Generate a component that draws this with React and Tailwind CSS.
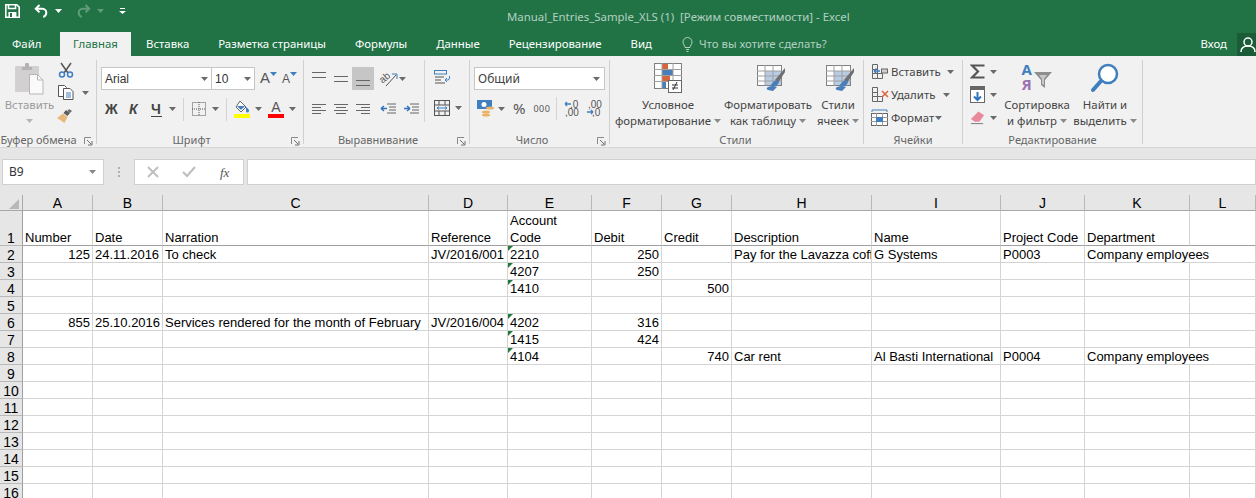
import React from 'react';

const Caret = ({ className = '', color = '#6a6a6a' }) => (
  <svg width="7" height="4" viewBox="0 0 7 4" className={`shrink-0 ${className}`}>
    <path d="M0 0h7L3.500 4z" fill={color} />
  </svg>
);

const Launcher = () => (
  <svg width="9" height="9" viewBox="0 0 9 9" className="shrink-0">
    <path d="M.5 7V.5H7" fill="none" stroke="#8a8a8a" />
    <path d="M3 3l4 4M8 4v4H4" fill="none" stroke="#6f6f6f" />
  </svg>
);

const Lines = ({ rows, width = 18, color = '#666' }) => (
  <svg width={width} height="16" viewBox={`0 0 ${width} 16`} className="shrink-0">
    {rows.map(([x, y, w], i) => (
      <rect key={i} x={x} y={y} width={w} height="1" fill={color} />
    ))}
  </svg>
);

const SaveIcon = () => (
  <svg width="15" height="14" viewBox="0 0 15 14" fill="none" stroke="#fff" strokeWidth="1.600">
    <path d="M.8.8h11l2.400 2.400v10H.8z" />
    <path d="M3.500 1v3.500h7V1" />
    <rect x="3.400" y="8" width="8" height="5" fill="#fff" stroke="none" />
    <rect x="5" y="9" width="2" height="4" fill="#217346" stroke="none" />
  </svg>
);

const UndoIcon = ({ color = '#fff' }) => (
  <svg width="15" height="14" viewBox="0 0 15 14" fill="none" stroke={color} strokeWidth="2">
    <path d="M5.500 1L1.800 4.800l3.700 3.600" />
    <path d="M2 4.800h6.500a4 4 0 0 1 3.800 4c0 2-1 3.400-3 4.200" />
  </svg>
);

const RedoIcon = () => (
  <svg width="15" height="14" viewBox="0 0 15 14" fill="none" stroke="#5f9c7c" strokeWidth="2">
    <path d="M9.500 1l3.700 3.800-3.700 3.600" />
    <path d="M13 4.800H6.500a4 4 0 0 0-3.800 4c0 2 1 3.400 3 4.200" />
  </svg>
);

const PasteIcon = () => (
  <svg width="30" height="32" viewBox="0 0 30 32">
    <rect x="0" y="3" width="24" height="26" rx="1" fill="#d3d0d1" />
    <path d="M7 4h3V1.500a2 2 0 0 1 4 0V4h3v3H7z" fill="#b5b2b3" />
    <path d="M14.500 11.500h8l5.500 5.500v14H14.500z" fill="#fafafa" stroke="#b9b6b7" />
    <path d="M22.500 11.500v5.500H28" fill="none" stroke="#b9b6b7" />
  </svg>
);

const CutIcon = () => (
  <svg width="16" height="16" viewBox="0 0 16 16" fill="none">
    <path d="M3 1l7 10M13 1L6 11" stroke="#555" strokeWidth="1.500" />
    <circle cx="4" cy="12.500" r="2.500" stroke="#3f7fbf" strokeWidth="1.500" />
    <circle cx="12" cy="12.500" r="2.500" stroke="#3f7fbf" strokeWidth="1.500" />
  </svg>
);

const CopyIcon = () => (
  <svg width="16" height="15" viewBox="0 0 16 15" fill="none">
    <path d="M.5.500h6l2 2v9h-8z" fill="#fff" stroke="#555" />
    <path d="M5.500 3.500h6.500l3 3v8h-9.500z" fill="#fff" stroke="#555" />
    <path d="M8 8h5M8 10h5M8 12h5" stroke="#3f7fbf" />
  </svg>
);

const BrushIcon = () => (
  <svg width="17" height="16" viewBox="0 0 17 16">
    <path d="M10 1l4 3-2.500 3-4-3z" fill="#5c5c5c" />
    <path d="M7 4.500l4.500 3.500-3 6L1 9z" fill="#e8b978" />
    <path d="M13 0l3 2-2 2-2.500-2z" fill="#6d6d6d" />
  </svg>
);

const BordersIcon = () => (
  <svg width="14" height="14" viewBox="0 0 14 14" fill="none" stroke="#555" strokeDasharray="1 1">
    <rect x=".5" y=".5" width="13" height="13" />
    <path d="M7 0v14M0 7h14" />
  </svg>
);

const FillIcon = () => (
  <svg width="17" height="18" viewBox="0 0 17 18">
    <path d="M6 1l6 6-5 5-5-5z" fill="#fff" stroke="#666" />
    <path d="M12 7c2 1 3 3 3 4a1.500 1.500 0 0 1-3 0c0-1 0-2 0-4z" fill="#3f7fbf" />
    <path d="M3 6h8l-4 4z" fill="#3f7fbf" />
    <rect x="0" y="14" width="16" height="4" fill="#ffff00" />
  </svg>
);

const OrientIcon = () => (
  <svg width="18" height="16" viewBox="0 0 18 16" fill="none">
    <text x="0" y="10" transform="rotate(-40 5 8)" fontSize="10" fontFamily="Liberation Sans, sans-serif" fill="#555">ab</text>
    <path d="M6 15L16 4" stroke="#555" />
    <path d="M12 3h5v5" stroke="#3f7fbf" />
  </svg>
);

const WrapIcon = () => (
  <svg width="17" height="15" viewBox="0 0 17 15" fill="none">
    <rect x=".5" y=".5" width="12" height="3.500" stroke="#3f7fbf" />
    <path d="M1 7h9M1 10h6M1 13h10" stroke="#555" />
    <path d="M11 10h2.500a2 2 0 0 0 2-2V6M11 10l2-2M11 10l2 2" stroke="#3f7fbf" />
  </svg>
);

const MergeIcon = () => (
  <svg width="16" height="16" viewBox="0 0 16 16" fill="none" stroke="#555">
    <rect x=".5" y=".5" width="15" height="15" />
    <path d="M0 5h16M0 11h16M5 0v5M11 0v5M5 11v5M11 11v5" />
    <path d="M3 8h10M3 8l2-1.500M3 8l2 1.500M13 8l-2-1.500M13 8l-2 1.500" stroke="#3f7fbf" />
  </svg>
);

const MoneyIcon = () => (
  <svg width="18" height="17" viewBox="0 0 18 17">
    <rect x="0" y="0" width="15" height="9" fill="#3f7fbf" />
    <circle cx="7" cy="4.500" r="2.500" fill="#fff" />
    <ellipse cx="13" cy="8" rx="4" ry="1.500" fill="#eab264" />
    <ellipse cx="9" cy="12" rx="4" ry="1.500" fill="#eab264" />
    <ellipse cx="9" cy="15" rx="4" ry="1.500" fill="#eab264" />
  </svg>
);

const DecimalIcon = ({ up }) => (
  <svg width="16" height="17" viewBox="0 0 16 17" fontFamily="Liberation Sans, sans-serif" fontSize="10" fill="#555">
    <text x={up ? 6 : 2} y="8">{up ? ',0' : ',00'}</text>
    <text x={up ? 1 : 6} y="16">{up ? ',00' : ',0'}</text>
    <path d={up ? 'M7 4H1M1 4l2-2M1 4l2 2' : 'M1 12h6M7 12l-2-2M7 12l-2 2'} stroke="#3f7fbf" strokeWidth="1.300" fill="none" />
  </svg>
);

const Sheet = ({ children, w = 28, h = 30 }) => (
  <svg width={w} height={h} viewBox="0 0 28 30">{children}</svg>
);

const CondFormatIcon = () => (
  <Sheet>
    <rect x=".5" y=".5" width="27" height="25" fill="#fff" stroke="#808080" />
    <rect x="8" y="1" width="6" height="5" fill="#d8643c" />
    <rect x="8" y="7" width="11" height="5" fill="#4a7ebb" />
    <rect x="8" y="13" width="8" height="5" fill="#d8643c" />
    <rect x="8" y="19" width="4" height="6" fill="#4a7ebb" />
    <path d="M8 0v26M19 0v26M0 6.500h28M0 12.500h28M0 18.500h28" stroke="#a0a0a0" fill="none" />
    <rect x="14.500" y="17.500" width="13" height="12" fill="#fff" stroke="#666" />
    <path d="M18 22h6M18 25h6M19 27l4-8" stroke="#333" fill="none" />
  </Sheet>
);

const TableBrushIcon = () => (
  <Sheet w={30}>
    <rect x=".5" y="2.500" width="24" height="20" fill="#fff" stroke="#808080" />
    <rect x="8" y="8" width="16" height="14" fill="#b8cce4" />
    <path d="M8 2v21M16 2v21M0 8h25M0 13h25M0 18h25" stroke="#a0a0a0" fill="none" />
    <path d="M28 5l-10 12 3 3L28 9z" fill="#6f6f6f" />
    <path d="M20 17c-4 1-5 4-7 6 4 1 8 0 9-4z" fill="#4a7ebb" />
    <path d="M11 27a5 2 0 0 1 9-3l-4 4z" fill="#4a7ebb" />
  </Sheet>
);

const CellInsertIcon = ({ mark }) => (
  <svg width="18" height="17" viewBox="0 0 18 17" fill="none">
    <path d="M1.500 1.500h5v5h-5zM1.500 10.500h5v5h-5zM6.500 10.500h5v5h-5z" stroke="#666" />
    <path d="M1.500 6.500h5v4h-5z" stroke="#666" />
    {mark === 'in' && (
      <>
        <rect x="10.500" y="6" width="6" height="4" stroke="#666" fill="#cfcfcf" />
        <path d="M3 8h6M3 8l2.500-2.500M3 8l2.500 2.500" stroke="#3f7fbf" strokeWidth="1.400" />
      </>
    )}
    {mark === 'del' && <path d="M11 5l6 6M17 5l-6 6" stroke="#d8643c" strokeWidth="1.500" />}
  </svg>
);

const CellFormatIcon = () => (
  <svg width="18" height="17" viewBox="0 0 18 17" fill="none">
    <path d="M1 1h15M1 1v2M16 1v2" stroke="#3f7fbf" />
    <rect x=".5" y="4.500" width="16" height="12" stroke="#666" fill="#fff" />
    <path d="M5.500 4v13M11.500 4v13M0 8.500h17M0 12.500h17" stroke="#999" />
    <rect x="5" y="8" width="7" height="5" fill="#3f7fbf" />
  </svg>
);

const SigmaIcon = () => (
  <svg width="15" height="15" viewBox="0 0 15 15" fill="none" stroke="#555" strokeWidth="2.200" className="shrink-0">
    <path d="M14.500 1.500H2L8 7.500 2 13.500h12.500" />
  </svg>
);

const FillDownIcon = () => (
  <svg width="15" height="17" viewBox="0 0 15 17" className="shrink-0">
    <rect x=".5" y=".5" width="14" height="16" fill="#fff" stroke="#666" />
    <rect x="0" y="0" width="15" height="4" fill="#666" />
    <path d="M7.500 6v8M4 10.500L7.500 14l3.500-3.500" stroke="#2f74bd" strokeWidth="2" fill="none" />
  </svg>
);

const EraserIcon = () => (
  <svg width="15" height="15" viewBox="0 0 16 15" className="shrink-0">
    <path d="M9 1l6 4-5 7H5L1 9z" fill="#e88a9c" />
    <path d="M1 14h13" stroke="#777" />
  </svg>
);

const SearchIcon = () => (
  <svg width="28" height="30" viewBox="0 0 28 30" fill="none" stroke="#3f7fbf">
    <circle cx="17" cy="11" r="9" strokeWidth="2.500" fill="#fff" />
    <path d="M10 18L2 27" strokeWidth="4" strokeLinecap="round" />
  </svg>
);

const SortFilterIcon = () => (
  <div className="relative h-[30px] w-[31px] shrink-0">
    <svg width="31" height="30" viewBox="0 0 31 30">
      <path d="M12 9h18l-7 8v8l-4-3v-5z" fill="#8e8e8e" />
      <path d="M17 12h8l-3 4v6l-2-1v-5z" fill="#c8c8c8" />
    </svg>
    <span className="absolute left-0 -top-[1px] text-[15px] font-bold leading-[15px] text-[#3f7fbf]">A</span>
    <span className="absolute left-0 top-[14px] text-[15px] font-bold leading-[15px] text-[#9b6fb1]">Я</span>
  </div>
);

const Sep = ({ className = '' }) => <div className={`h-[23px] w-px shrink-0 bg-[#d4d4d4] ${className}`} />;

const Group = ({ width, label, launcher, labelPad = '', children }) => (
  <div className={`h-[84px] shrink-0 border-r border-[#d0d0d0] ${width}`}>
    <div className="h-[74px]">{children}</div>
    <div className="relative flex h-3 items-center justify-center">
      <span className={`text-[11px] leading-3 whitespace-nowrap text-[#666] ${labelPad}`}>{label}</span>
      {launcher && (
        <div className="absolute right-[3px] top-[3px]">
          <Launcher />
        </div>
      )}
    </div>
  </div>
);

const BigLabel = ({ top, bottom, width, caret = true }) => (
  <div className={`flex shrink-0 flex-col items-center text-[11.400px] leading-4 text-[#444] ${width}`}>
    <span className="whitespace-nowrap">{top}</span>
    <span className="flex items-center gap-[3px] whitespace-nowrap">
      {bottom}
      {caret && <Caret color="#8a8a8a" />}
    </span>
  </div>
);

const Ribbon = () => (
  <div className="flex h-[92px] border-b border-[#d5d5d5] bg-[#f1f1f1] pt-1 font-['Noto_Sans',sans-serif]">
    <Group width="w-[97px]" label="Буфер обмена" launcher labelPad="mr-[19px]">
      <div className="flex">
        <div className="flex w-[56px] flex-col items-center pl-[3px] pt-[3px]">
          <PasteIcon />
          <span className="mt-[1px] text-[11.400px] leading-[18px] text-[#9a9a9a]">Вставить</span>
          <Caret className="mt-[5px]" color="#b5b5b5" />
        </div>
        <div className="flex flex-col pt-[2px]">
          <div className="ml-[2px]"><CutIcon /></div>
          <div className="ml-[2px] mt-[7px] flex items-center gap-[8px]"><CopyIcon /><Caret /></div>
          <div className="mt-[9px]"><BrushIcon /></div>
        </div>
      </div>
    </Group>

    <Group width="w-[207px]" label="Шрифт" launcher labelPad="mr-[17px]">
      <div className="pl-[4px] pt-[7px]">
        <div className="flex h-[23px] items-center">
          <div className="flex h-[23px] w-[111px] items-center justify-between border border-[#c6c6c6] bg-white pl-[3px] pr-[3px] font-['Liberation_Sans',sans-serif] text-[12px] text-[#333]">
            Arial<Caret />
          </div>
          <div className="-ml-px flex h-[23px] w-[44px] items-center justify-between border border-[#c6c6c6] bg-white pl-[3px] pr-[3px] font-['Liberation_Sans',sans-serif] text-[12px] text-[#333]">
            10<Caret />
          </div>
          <span className="ml-[5px] font-['Liberation_Sans',sans-serif] text-[15px] text-[#555]">A</span>
          <Caret className="-mt-[9px]" color="#3f7fbf" />
          <span className="ml-[5px] font-['Liberation_Sans',sans-serif] text-[12px] text-[#555]">A</span>
          <Caret className="-mt-[9px]" color="#3f7fbf" />
        </div>
        <div className="mt-[10px] flex h-[18px] items-center text-[14px] text-[#444]">
          <span className="ml-[4px] w-[22px] font-['Liberation_Sans',sans-serif] font-bold leading-none">Ж</span>
          <span className="ml-[2px] w-[20px] font-['Liberation_Sans',sans-serif] font-bold italic leading-none">К</span>
          <span className="ml-[2px] w-[11px] border-b border-[#444] font-['Liberation_Sans',sans-serif] font-bold leading-none">Ч</span>
          <Caret className="ml-[7px]" />
          <Sep className="ml-[7px]" />
          <div className="ml-[8px]"><BordersIcon /></div>
          <Caret className="ml-[6px]" />
          <Sep className="ml-[7px]" />
          <div className="ml-[7px]"><FillIcon /></div>
          <Caret className="ml-[4px]" />
          <div className="ml-[6px] flex w-[16px] flex-col items-center">
            <span className="font-['Liberation_Sans',sans-serif] text-[14px] leading-[14px] text-[#555]">A</span>
            <div className="h-[4px] w-[16px] bg-[#f00]" />
          </div>
          <Caret className="ml-[5px]" />
        </div>
      </div>
    </Group>

    <Group width="w-[166px]" label="Выравнивание" launcher labelPad="mr-[17px]">
      <div className="flex">
        <div className="h-[62px] w-[121px] border-r border-[#d4d4d4] pl-[8px] pt-[7px]">
          <div className="flex h-[23px] items-center">
            <Lines rows={[[0, 1, 14], [0, 6, 14]]} width={15} />
            <div className="ml-[7px]"><Lines rows={[[0, 5, 14], [0, 10, 14]]} width={15} /></div>
            <div className="ml-[3px] flex h-[23px] w-[22px] items-center justify-center bg-[#c6c6c6]">
              <Lines rows={[[0, 9, 14], [0, 14, 14]]} width={15} />
            </div>
            <div className="ml-[6px]"><OrientIcon /></div>
            <Caret className="ml-[1px]" />
          </div>
          <div className="mt-[10px] flex h-[18px] items-center gap-[6px]">
            <Lines rows={[[0, 3, 14], [0, 6, 9], [0, 9, 14], [0, 12, 9]]} width={16} />
            <Lines rows={[[0, 3, 14], [2, 6, 10], [0, 9, 14], [2, 12, 10]]} width={16} />
            <Lines rows={[[0, 3, 14], [5, 6, 9], [0, 9, 14], [5, 12, 9]]} width={16} />
            <svg width="17" height="16" viewBox="0 0 17 16" fill="none" className="ml-[2px]">
              <path d="M7 3h9M9 6h7M9 9h7M7 12h9" stroke="#666" />
              <path d="M1 7.500h6M1 7.500l3-2.500M1 7.500l3 2.500" stroke="#2f74bd" strokeWidth="1.500" />
            </svg>
            <svg width="17" height="16" viewBox="0 0 17 16" fill="none">
              <path d="M7 3h9M9 6h7M9 9h7M7 12h9" stroke="#666" />
              <path d="M1 7.500h6M7 7.500L4 5M7 7.500L4 10" stroke="#2f74bd" strokeWidth="1.500" />
            </svg>
          </div>
        </div>
        <div className="pl-[9px] pt-[10px]">
          <WrapIcon />
          <div className="mt-[15px] flex items-center gap-[5px]"><MergeIcon /><Caret /></div>
        </div>
      </div>
    </Group>

    <Group width="w-[140px]" label="Число" launcher labelPad="mr-[15px]">
      <div className="pl-[4px] pt-[7px]">
        <div className="flex h-[23px] w-[131px] items-center justify-between border border-[#c6c6c6] bg-white pl-[3px] pr-[4px] text-[12px] text-[#444]">
          Общий<Caret />
        </div>
        <div className="mt-[9px] flex h-[19px] items-center">
          <div className="ml-[3px]"><MoneyIcon /></div>
          <Caret className="ml-[3px]" />
          <span className="ml-[8px] text-[15px] leading-none text-[#555]">%</span>
          <span className="ml-[8px] text-[9px] leading-none tracking-[0.500px] text-[#555]">000</span>
          <Sep className="ml-[6px]" />
          <div className="ml-[7px]"><DecimalIcon up /></div>
          <div className="ml-[6px]"><DecimalIcon /></div>
        </div>
      </div>
    </Group>

    <Group width="w-[254px]" label="Стили" labelPad="mr-[2px]">
      <div className="flex pt-[3px]">
        <div className="flex w-[113px] flex-col items-center pl-[3px]">
          <CondFormatIcon />
          <div className="mt-[4px]"><BigLabel top="Условное" bottom="форматирование" width="w-[113px]" /></div>
        </div>
        <div className="flex w-[90px] flex-col items-center">
          <div className="ml-[6px]"><TableBrushIcon /></div>
          <div className="mt-[4px]"><BigLabel top="Форматировать" bottom="как таблицу" width="w-[90px]" /></div>
        </div>
        <div className="flex w-[50px] flex-col items-center">
          <div className="ml-[3px]"><TableBrushIcon /></div>
          <div className="mt-[4px]"><BigLabel top="Стили" bottom="ячеек" width="w-[50px]" /></div>
        </div>
      </div>
    </Group>

    <Group width="w-[99px]" label="Ячейки">
      <div className="flex flex-col pl-[7px] text-[11.400px] text-[#444]">
        <div className="flex h-[23px] items-center">
          <CellInsertIcon mark="in" />
          <span className="ml-[2px] w-[56px]">Вставить</span>
          <Caret />
        </div>
        <div className="flex h-[23px] items-center">
          <CellInsertIcon mark="del" />
          <span className="ml-[2px] w-[52px]">Удалить</span>
          <Caret />
        </div>
        <div className="flex h-[23px] items-center">
          <CellFormatIcon />
          <span className="ml-[2px] w-[44px]">Формат</span>
          <Caret />
        </div>
      </div>
    </Group>

    <Group width="w-[180px]" label="Редактирование">
      <div className="flex">
        <div className="flex w-[40px] flex-col pl-[7px]">
          <div className="flex h-[23px] items-center gap-[5px]"><SigmaIcon /><Caret /></div>
          <div className="flex h-[23px] items-center gap-[5px]"><FillDownIcon /><Caret /></div>
          <div className="flex h-[23px] items-center gap-[5px]"><EraserIcon /><Caret /></div>
        </div>
        <div className="flex w-[68px] flex-col items-center pt-[3px]">
          <SortFilterIcon />
          <div className="mt-[4px]"><BigLabel top="Сортировка" bottom="и фильтр" width="w-[68px]" /></div>
        </div>
        <div className="flex w-[68px] flex-col items-center pt-[3px]">
          <SearchIcon />
          <div className="mt-[4px]"><BigLabel top="Найти и" bottom="выделить" width="w-[68px]" /></div>
        </div>
      </div>
    </Group>
  </div>
);

const TABS = [
  ['Вставка', 'ml-[15px]'],
  ['Разметка страницы', 'ml-[29px]'],
  ['Формулы', 'ml-[29px]'],
  ['Данные', 'ml-[29px]'],
  ['Рецензирование', 'ml-[29px]'],
  ['Вид', 'ml-[29px]'],
];

const TitleBar = () => (
  <div className="bg-[#217346] font-['Noto_Sans',sans-serif]">
    <div className="flex h-8 items-start">
      <div className="flex w-[507px] shrink-0 items-center pl-[5px] pt-1">
        <SaveIcon />
        <div className="ml-[14px]"><UndoIcon /></div>
        <Caret className="ml-[6px]" color="#fff" />
        <div className="ml-[14px]"><RedoIcon /></div>
        <Caret className="ml-[6px]" color="#5f9c7c" />
        <svg width="7" height="6" viewBox="0 0 7 6" className="ml-[15px]">
          <path d="M1 .5h5" stroke="#fff" />
          <path d="M0 3h7L3.500 6z" fill="#fff" />
        </svg>
      </div>
      <span className="pt-[9px] text-[11.400px] leading-4 whitespace-pre text-[#b3d0c0]">
        Manual_Entries_Sample_XLS (1)  [Режим совместимости] - Excel
      </span>
    </div>
    <div className="flex h-6 items-end text-[11.400px] text-white">
      <span className="ml-3 w-[48px] pb-[4px] leading-4">Файл</span>
      <span className="flex h-6 w-[71px] items-center justify-center bg-[#f1f1f1] leading-4 text-[#217346]">Главная</span>
      {TABS.map(([t, ml]) => (
        <span key={t} className={`pb-[4px] leading-4 whitespace-nowrap ${ml}`}>{t}</span>
      ))}
      <svg width="11" height="15" viewBox="0 0 11 15" fill="none" stroke="#b3d0c0" className="mb-[4px] ml-[30px]">
        <path d="M3 10.500C3 8.500 1 7.500 1 5a4.500 4.500 0 0 1 9 0c0 2.500-2 3.500-2 5.500zM4 12.500h3M4.500 14.500h2" />
      </svg>
      <span className="mb-[4px] ml-[6px] leading-4 whitespace-nowrap text-[#b3d0c0]">Что вы хотите сделать?</span>
      <span className="mb-[4px] ml-auto leading-4">Вход</span>
      <div className="ml-[10px] flex h-[23px] w-[19px] items-center overflow-hidden bg-[#1a5c38] pl-[3px]">
        <svg width="18" height="16" viewBox="0 0 18 16" fill="none" stroke="#fff" strokeWidth="1.500" className="shrink-0">
          <circle cx="8" cy="5" r="4" />
          <path d="M1 15c0-4 3-6 7-6s7 2 7 6" />
        </svg>
      </div>
    </div>
  </div>
);

const FormulaBar = () => (
  <div className="flex h-[46px] bg-[#e6e6e6] pl-[2px] pt-[10px] font-['Liberation_Sans',sans-serif]">
    <div className="flex h-[26px] w-[102px] items-center justify-between border border-[#d0d0d0] bg-white pl-[6px] pr-[7px] font-['Noto_Sans',sans-serif] text-[12px] text-[#333]">
      B9<Caret color="#888" />
    </div>
    <div className="ml-[13px] flex h-[26px] w-[3px] flex-col items-center justify-center gap-[2px]">
      <div className="h-[2px] w-[2px] bg-[#b0b0b0]" />
      <div className="h-[2px] w-[2px] bg-[#b0b0b0]" />
      <div className="h-[2px] w-[2px] bg-[#b0b0b0]" />
    </div>
    <div className="ml-[14px] flex h-[26px] w-[110px] items-center border border-[#d0d0d0] bg-white">
      <svg width="12" height="12" viewBox="0 0 12 12" stroke="#bdbdbd" strokeWidth="1.800" className="ml-[12px]">
        <path d="M1 1l10 10M11 1L1 11" />
      </svg>
      <svg width="14" height="12" viewBox="0 0 14 12" stroke="#bdbdbd" strokeWidth="2" fill="none" className="ml-[23px]">
        <path d="M1 6l4 4 8-9" />
      </svg>
      <span className="ml-[24px] font-['Liberation_Serif',serif] text-[13px] italic leading-none text-[#555]">fx</span>
    </div>
    <div className="ml-[3px] h-[26px] flex-1 border border-[#d0d0d0] bg-white" />
  </div>
);

const COLS = ['A', 'B', 'C', 'D', 'E', 'F', 'G', 'H', 'I', 'J', 'K', 'L'];

const ROWS = {
  1: { A: 'Number', B: 'Date', C: 'Narration', D: 'Reference', E: 'Account Code', F: 'Debit', G: 'Credit', H: 'Description', I: 'Name', J: 'Project Code', K: 'Department' },
  2: { A: '125', B: '24.11.2016', C: 'To check', D: 'JV/2016/001', E: '2210', F: '250', H: 'Pay for the Lavazza coffee', I: 'G Systems', J: 'P0003', K: 'Company employees' },
  3: { E: '4207', F: '250' },
  4: { E: '1410', G: '500' },
  6: { A: '855', B: '25.10.2016', C: 'Services rendered for the month of February', D: 'JV/2016/004', E: '4202', F: '316' },
  7: { E: '1415', F: '424' },
  8: { E: '4104', G: '740', H: 'Car rent', I: 'Al Basti International', J: 'P0004', K: 'Company employees' },
};

const isRight = (col, row) => row > 1 && ['A', 'F', 'G'].includes(col);

const Cell = ({ col, row }) => {
  const value = ROWS[row]?.[col];
  const wide = col === 'K' && row > 1 && value;
  if (col === 'L' && (row === 2 || row === 8)) return null;
  const flag = col === 'E' && value && row > 1;
  return (
    <div
      className={`relative flex items-end overflow-hidden border-r border-b border-[#d4d4d4] px-[2px] text-[13px] leading-[17px] text-black ${
        row === 1 ? 'border-b-[#9f9f9f]' : ''
      } ${isRight(col, row) ? 'justify-end' : ''} ${wide ? 'col-span-2' : ''} ${
        row === 1 && col === 'E' ? 'whitespace-normal' : 'whitespace-nowrap'
      }`}
    >
      {flag && (
        <svg width="5" height="5" viewBox="0 0 5 5" className="absolute left-0 top-0">
          <path d="M0 0h5L0 5z" fill="#1f7a3c" />
        </svg>
      )}
      {value && <span className="translate-y-px">{value}</span>}
    </div>
  );
};

const SheetGrid = () => {
  const rows = Array.from({ length: 16 }, (_, i) => i + 1);
  return (
    <div className="grid grid-cols-[23px_70px_70px_266px_79px_84px_70px_70px_140px_129px_84px_105px_66px] grid-rows-[16px_35px] auto-rows-[17px] bg-white font-['Liberation_Sans',sans-serif]">
      <div className="flex items-end justify-end border-r border-b border-[#a8a8a8] bg-[#e6e6e6] pb-[1px] pr-[3px]">
        <svg width="10" height="10" viewBox="0 0 10 10"><path d="M10 0v10H0z" fill="#b8b8b8" /></svg>
      </div>
      {COLS.map(c => (
        <div key={c} className="flex items-center justify-center border-r border-b border-r-[#b9b9b9] border-b-[#a8a8a8] bg-[#e6e6e6] text-[14px] leading-none text-black">
          {c}
        </div>
      ))}
      {rows.map(row => (
        <React.Fragment key={row}>
          <div className="flex items-end justify-center border-r border-b border-r-[#a0a0a0] border-b-[#b9b9b9] bg-[#e6e6e6] text-[14px] leading-[16px] text-black">
            <span className="translate-y-px">{row}</span>
          </div>
          {COLS.map(col => <Cell key={col} col={col} row={row} />)}
        </React.Fragment>
      ))}
    </div>
  );
};

export default function App() {
  return (
    <div className="h-[498px] w-[1256px] overflow-hidden bg-white">
      <TitleBar />
      <Ribbon />
      <div className="h-px bg-[#e6e6e6]" />
      <FormulaBar />
      <SheetGrid />
    </div>
  );
}
